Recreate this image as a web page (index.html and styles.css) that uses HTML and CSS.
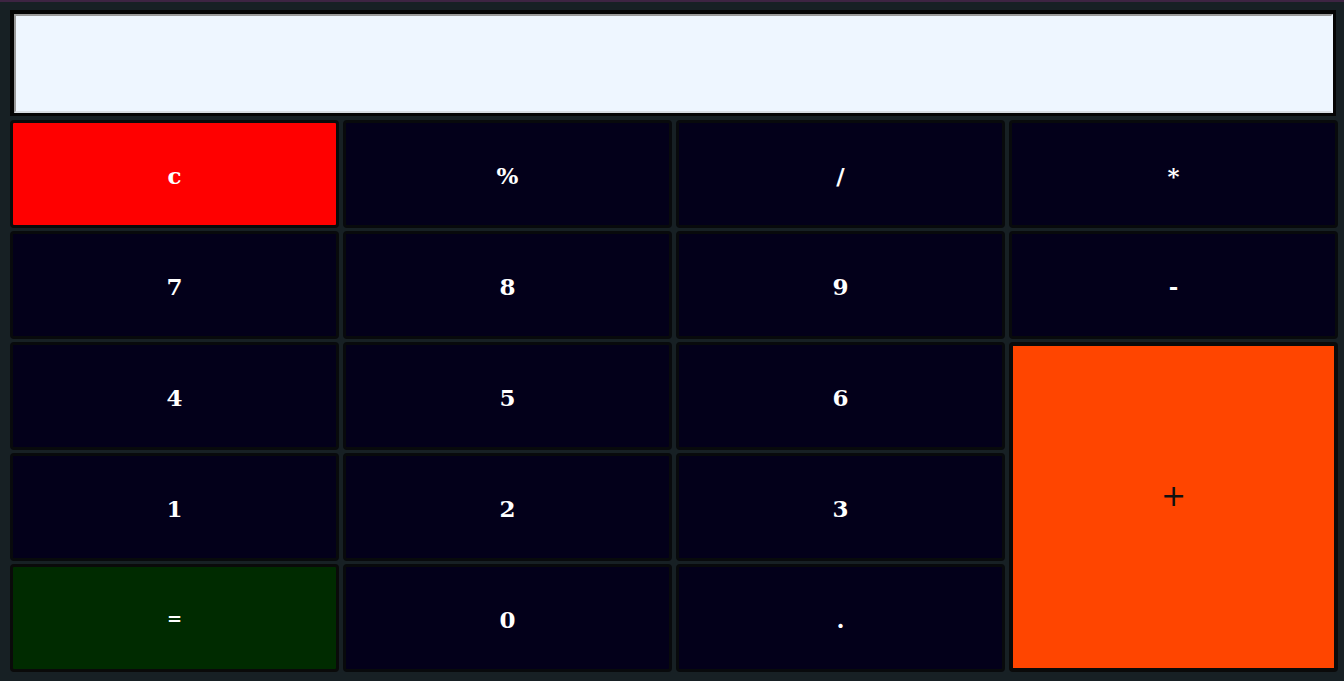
FILE: index.html
```html
<!DOCTYPE html>
<html>
<head>
<meta charset="utf-8">
<title>Calculator</title>
<link rel="stylesheet" href="styles.css">
</head>
<body>
<div class="calc">
  <div class="display"><input class="screen" type="text" value=""></div>
  <button class="key key-clear">c</button>
  <button class="key">%</button>
  <button class="key">/</button>
  <button class="key">*</button>
  <button class="key">7</button>
  <button class="key">8</button>
  <button class="key">9</button>
  <button class="key">-</button>
  <button class="key">4</button>
  <button class="key">5</button>
  <button class="key">6</button>
  <button class="key key-plus">+</button>
  <button class="key">1</button>
  <button class="key">2</button>
  <button class="key">3</button>
  <button class="key key-equal">=</button>
  <button class="key">0</button>
  <button class="key">.</button>
</div>
</body>
</html>
```
FILE: styles.css
```css
html, body {
  margin: 0;
  padding: 0;
}
body {
  background: #172024;
  border-top: 2px solid #3d2442;
  height: 679px;
  overflow: hidden;
  font-family: "DejaVu Serif", "Liberation Serif", serif;
}
.calc {
  display: grid;
  grid-template-columns: repeat(4, 329px);
  grid-template-rows: 107px repeat(5, 108px);
  column-gap: 4px;
  row-gap: 3px;
  padding: 8px 6px 0 10px;
}
.display {
  grid-column: 1 / span 4;
  margin-bottom: 1px;
  margin-right: 2px;
  background: #050505;
  padding: 4px 3px 3px 4px;
  box-sizing: border-box;
}
.screen {
  display: block;
  width: 100%;
  height: 100%;
  box-sizing: border-box;
  margin: 0;
  background: #eef6ff;
  border: 2px solid;
  border-color: #9a9a9a #eef6ff #d8dde2 #9a9a9a;
  outline: none;
}
.key {
  margin: 0;
  padding: 2px 0 0 0;
  border: 3px solid #080a0c;
  border-radius: 4px;
  background: #03001a;
  color: #ffffff;
  font-family: "DejaVu Serif", "Liberation Serif", serif;
  font-weight: bold;
  font-size: 23px;
  line-height: 1;
}
.key-clear {
  background: #ff0000;
  border-color: #0a0a0a;
}
.key-equal {
  background: #002b00;
  border-color: #0a0a0a;
  font-size: 18px;
}
.key-plus {
  grid-column: 4;
  grid-row: 4 / span 3;
  background: #ff4500;
  border: 4px solid #0a0a0a;
  color: #111111;
  font-family: "DejaVu Sans", "Liberation Sans", sans-serif;
  font-weight: normal;
  font-size: 30px;
  padding: 0 0 22px 0;
}
```
